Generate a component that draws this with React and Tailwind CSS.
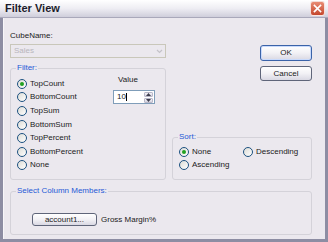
import React from "react";

const font = { fontFamily: '"Liberation Sans", Arial, sans-serif' };

function Radio({ label, checked }) {
  return (
    <div className="flex items-center gap-[3px] h-[13.6px]">
      <span className="w-[10px] h-[10px] rounded-full border border-[#1c5180] bg-gradient-to-br from-[#dcdcd6] to-white flex items-center justify-center">
        {checked && <span className="w-[4px] h-[4px] rounded-full bg-[#21a121]" />}
      </span>
      <span className="text-[8px] leading-none text-[#1a1a1a]">{label}</span>
    </div>
  );
}

function Button({ children, def, className = "" }) {
  return (
    <div
      className={
        "flex items-center justify-center rounded-[3px] border text-[8px] leading-none text-[#1a1a1a] bg-gradient-to-b from-white via-[#f2f1f5] to-[#d9d8e3] " +
        (def ? "border-[#3b63a8] shadow-[inset_0_0_0_1px_#c9dafc]" : "border-[#5f6579]") +
        " " +
        className
      }
    >
      {children}
    </div>
  );
}

function Group({ title, className = "", children }) {
  return (
    <div className={"relative rounded-[3px] border border-[#d4d2d9] " + className}>
      <span className="absolute -top-[5px] left-[5px] px-[1px] bg-[#ebe8ee] text-[8px] leading-none text-[#2559d6]">
        {title}
      </span>
      {children}
    </div>
  );
}

export default function App() {
  return (
    <div style={font} className="w-[328px] h-[242px] flex flex-col bg-[#8d8da3] overflow-hidden">
      {/* Title bar */}
      <div className="h-[18px] flex items-center justify-between pl-[5px] pr-[3px] bg-gradient-to-b from-white via-[#eeedf3] to-[#cfcedb] border-b border-[#a9a8ba]">
        <span className="text-[11px] font-bold text-[#1c1c2c]">Filter View</span>
        <div className="w-[15px] h-[15px] rounded-[3px] bg-gradient-to-b from-[#e88b73] to-[#c4462c] border border-white/80 flex items-center justify-center">
          <svg width="9" height="9" viewBox="0 0 9 9">
            <path d="M1.5 1.5 L7.5 7.5 M7.5 1.5 L1.5 7.5" stroke="white" strokeWidth="1.7" strokeLinecap="square" />
          </svg>
        </div>
      </div>
      {/* Body */}
      <div className="flex-1 mx-[3px] mb-[3px] bg-[#ebe8ee] border-l border-[#f7f6f9] pl-[6px] pr-[13px] pt-[13px] flex flex-col">
        <div className="flex">
          {/* left column */}
          <div className="w-[156px] flex flex-col">
            <span className="text-[8px] leading-none text-[#1a1a1a] h-[10px] pt-px">CubeName:</span>
            <div className="mt-[3px] h-[14px] border border-[#c9c7ba] bg-[#ebe8ee] flex items-center justify-between pl-[3px] pr-[2px]">
              <span className="text-[8px] leading-none text-[#b8b6bc]">Sales</span>
              <svg width="7" height="5" viewBox="0 0 7 5">
                <path d="M1 1 L3.5 3.5 L6 1" stroke="#c4c2c8" strokeWidth="1.2" fill="none" />
              </svg>
            </div>
            <Group title="Filter:" className="mt-[10px] h-[112px] pt-[8px] pl-[6px]">
              <div className="flex">
                <div className="w-[96px] flex flex-col">
                  <Radio label="TopCount" checked />
                  <Radio label="BottomCount" />
                  <Radio label="TopSum" />
                  <Radio label="BottomSum" />
                  <Radio label="TopPercent" />
                  <Radio label="BottomPercent" />
                  <Radio label="None" />
                </div>
                <div className="flex flex-col">
                  <span className="pl-[5px] -mt-[1px] text-[8px] leading-none text-[#1a1a1a]">Value</span>
                  <div className="mt-[6px] w-[42px] h-[14px] border border-[#7f9db9] bg-white flex items-center justify-between pl-[3px] pr-[1px]">
                    <span className="text-[8px] leading-none text-[#1a1a1a]">10<span className="inline-block w-px h-[8px] bg-black align-middle" /></span>
                    <div className="flex flex-col h-[11px] w-[9px] gap-px">
                      <div className="flex-1 rounded-[1px] bg-gradient-to-b from-[#f4f3f8] to-[#d5d4e0] border border-[#b9b8c9] flex items-center justify-center">
                        <svg width="5" height="3" viewBox="0 0 5 3"><path d="M0 3 L2.5 0 L5 3Z" fill="#3c3c4c" /></svg>
                      </div>
                      <div className="flex-1 rounded-[1px] bg-gradient-to-b from-[#f4f3f8] to-[#d5d4e0] border border-[#b9b8c9] flex items-center justify-center">
                        <svg width="5" height="3" viewBox="0 0 5 3"><path d="M0 0 L2.5 3 L5 0Z" fill="#3c3c4c" /></svg>
                      </div>
                    </div>
                  </div>
                </div>
              </div>
            </Group>
          </div>
          {/* right column */}
          <div className="flex-1 flex flex-col ml-[6px]">
            <div className="flex flex-col items-end gap-[5px] mt-[14px]">
              <Button def className="w-[52px] h-[16px]">OK</Button>
              <Button className="w-[52px] h-[15px]">Cancel</Button>
            </div>
            <Group title="Sort:" className="mt-auto h-[43px] pt-[7px] pl-[6px]">
              <div className="grid grid-cols-[64px_auto]">
                <Radio label="None" checked />
                <Radio label="Descending" />
                <Radio label="Ascending" />
              </div>
            </Group>
          </div>
        </div>
        <Group title="Select Column Members:" className="mt-[11px] h-[44px] pl-[21px] pt-[21px]">
          <div className="flex items-center gap-[4px]">
            <Button className="w-[65px] h-[13px]">account1...</Button>
            <span className="text-[8px] leading-none text-[#1a1a1a]">Gross Margin%</span>
          </div>
        </Group>
      </div>
    </div>
  );
}
